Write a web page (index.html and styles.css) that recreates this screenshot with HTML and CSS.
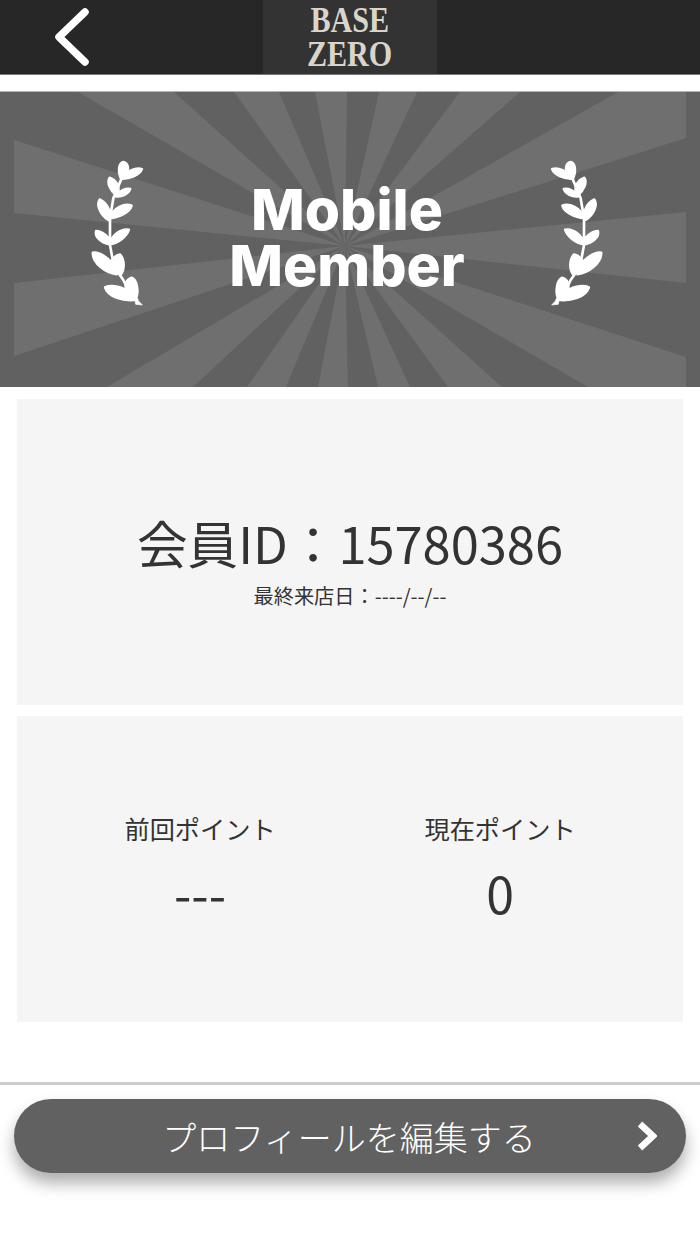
FILE: index.html
```html
<!DOCTYPE html>
<html lang="ja">
<head>
    <meta charset="UTF-8">
    <meta name="viewport" content="width=device-width, initial-scale=1.0">
    <title>Mobile Member</title>
    <link rel="stylesheet" href="styles.css">
</head>
<body>
    <header class="topbar">
        <a class="back" href="#" aria-label="back">
            <svg class="back-icon" viewBox="0 0 40 60">
                <path d="M33 5 L7 30 L33 55" fill="none" stroke="#fff" stroke-width="7.5" stroke-linecap="round" stroke-linejoin="round"/>
            </svg>
        </a>
        <div class="logo">
            <span>BASE</span>
            <span>ZERO</span>
        </div>
    </header>

    <section class="banner">
        <svg class="rays" viewBox="0 0 700 295">
            <g fill="#6f6f6f">
                <polygon points="345,154 14,48 14,121"/>
                <polygon points="345,154 14,191 14,264"/>
                <polygon points="345,154 78,0 174,0"/>
                <polygon points="345,154 234,0 279,0"/>
                <polygon points="345,154 315,0 347,0"/>
                <polygon points="345,154 379,0 417,0"/>
                <polygon points="345,154 460,0 520,0"/>
                <polygon points="345,154 618,0 686,0 686,46"/>
                <polygon points="345,154 686,120 686,191"/>
                <polygon points="345,154 686,265 686,295 588,295"/>
                <polygon points="345,154 502,295 448,295"/>
                <polygon points="345,154 410,295 378,295"/>
                <polygon points="345,154 348,295 318,295"/>
                <polygon points="345,154 286,295 247,295"/>
                <polygon points="345,154 193,295 107,295"/>
            </g>
        </svg>
        <div class="banner-inner">
            <svg class="laurel" viewBox="0 0 225 465">
                <defs>
                    <g id="sprig" fill="#fff" stroke="#fff" stroke-width="7" stroke-linejoin="round">
                        <path d="M125 70 L100 130 L90 190 L90 270 L102 335 L130 375 L150 415" fill="none" stroke-width="8"/>
                        <path d="M122 70 C112 50 116 24 130 21 C146 24 148 45 138 58 Z"/>
                        <path d="M125 72 C140 47 168 36 186 42 C180 60 150 72 125 72 Z"/>
                        <path d="M108 120 C90 105 79 82 89 68 C105 74 118 90 116 105 Z"/>
                        <path d="M106 124 C118 106 138 99 151 102 C146 117 125 127 106 124 Z"/>
                        <path d="M85 195 C62 180 47 150 59 133 C78 142 94 165 88 190 Z"/>
                        <path d="M88 190 C100 157 135 143 155 152 C150 171 120 187 88 190 Z"/>
                        <path d="M88 268 C65 266 43 245 48 228 C65 228 90 245 92 265 Z"/>
                        <path d="M88 268 C95 240 125 218 147 224 C140 245 115 266 88 268 Z"/>
                        <path d="M110 358 C75 353 38 325 38 293 C55 288 90 310 105 335 Z"/>
                        <path d="M102 343 C87 325 97 303 120 298 C132 310 137 340 122 360 Z"/>
                        <path d="M172 434 C130 441 83 425 75 397 C95 388 130 395 150 415 Z"/>
                        <path d="M140 412 C132 390 138 373 155 368 C172 375 177 410 168 431 Z"/>
                        <path d="M164 432 L172 434 L187 450 L167 448 Z" stroke-width="2"/>
                    </g>
                </defs>
                <use href="#sprig"/>
            </svg>
            <h1 class="banner-title">Mobile<br>Member</h1>
            <svg class="laurel laurel-right" viewBox="0 0 225 465">
                <use href="#sprig"/>
            </svg>
        </div>
    </section>

    <section class="card card-id">
        <p class="member-id">会員ID：15780386</p>
        <p class="last-visit">最終来店日：----/--/--</p>
    </section>

    <section class="card card-points">
        <div class="point-col">
            <p class="point-label">前回ポイント</p>
            <p class="point-value">---</p>
        </div>
        <div class="point-col">
            <p class="point-label">現在ポイント</p>
            <p class="point-value">0</p>
        </div>
    </section>

    <div class="footer-bar">
        <a class="edit-btn" href="#">
            <span class="edit-text">プロフィールを編集する</span>
            <svg class="edit-icon" viewBox="0 0 20 30">
                <path d="M3 3 L16 15 L3 27" fill="none" stroke="#fff" stroke-width="6.5"/>
            </svg>
        </a>
    </div>
</body>
</html>
```

FILE: styles.css
```css
body {
    font-family: "Noto Sans CJK JP", "Noto Sans", sans-serif;
    background-color: #ffffff;
    color: #333333;
    margin: 0;
    padding: 0;
}
p {
    margin: 0;
}
.topbar {
    display: grid;
    grid-template-columns: 1fr 174px 1fr;
    height: 74px;
    background: #272727;
    border-bottom: 1px solid #777777;
}
.back {
    display: flex;
    align-items: center;
    padding-left: 52px;
}
.back-icon {
    width: 40px;
    height: 60px;
}
.logo {
    grid-column: 2;
    display: flex;
    flex-direction: column;
    align-items: center;
    background: #333333;
    color: #d9d5cd;
    font-family: "Liberation Serif", serif;
    font-weight: 700;
    font-size: 35px;
    line-height: 34px;
    padding-top: 4px;
}
.logo span {
    display: block;
    transform: scaleX(0.86);
}
.banner {
    display: grid;
    height: 295px;
    margin-top: 16px;
    background: #616161;
    border-top: 1px solid #b5b5b5;
}
.rays, .banner-inner {
    grid-area: 1 / 1;
}
.rays {
    display: block;
    width: 700px;
    height: 295px;
}
.banner-inner {
    display: flex;
    align-items: flex-start;
    padding: 63px 0 0 80px;
}
.laurel {
    width: 75px;
    height: 155px;
    flex: none;
}
.laurel-right {
    transform: scaleX(-1);
}
.banner-title {
    width: 384px;
    margin: 27px 0 0 0;
    color: #ffffff;
    font-family: "Inter", "Liberation Sans", sans-serif;
    font-weight: 800;
    font-size: 57px;
    line-height: 56px;
    letter-spacing: 0;
    text-align: center;
}
.card {
    background: #f5f5f5;
    height: 306px;
    margin: 11px 17px 0 17px;
}
.card-id {
    display: flex;
    flex-direction: column;
    align-items: center;
    padding-top: 104px;
    height: 202px;
    margin-top: 12px;
}
.member-id {
    font-size: 50.6px;
    line-height: 78px;
}
.last-visit {
    font-size: 20.2px;
    line-height: 30px;
}
.card-points {
    display: grid;
    grid-template-columns: 300px 300px;
    justify-content: center;
    padding-top: 94px;
    height: 212px;
}
.point-col {
    display: flex;
    flex-direction: column;
    align-items: center;
}
.point-label {
    font-size: 25.2px;
    line-height: 36px;
}
.point-value {
    font-size: 50px;
    line-height: 80px;
    margin-top: 6px;
}
.footer-bar {
    margin-top: 60px;
    border-top: 3px solid #cccccc;
    padding: 14px 14px 70px 14px;
}
.edit-btn {
    display: grid;
    grid-template-columns: 1fr auto 1fr;
    align-items: center;
    height: 74px;
    padding: 0 29px 0 0;
    border-radius: 37px;
    background: #616161;
    color: #ffffff;
    font-size: 34px;
    text-decoration: none;
    box-shadow: 0 10px 16px rgba(0, 0, 0, 0.32);
}
.edit-text {
    grid-column: 2;
    font-weight: 300;
    padding-left: 27px;
}
.edit-icon {
    justify-self: end;
    width: 20px;
    height: 30px;
}
```
